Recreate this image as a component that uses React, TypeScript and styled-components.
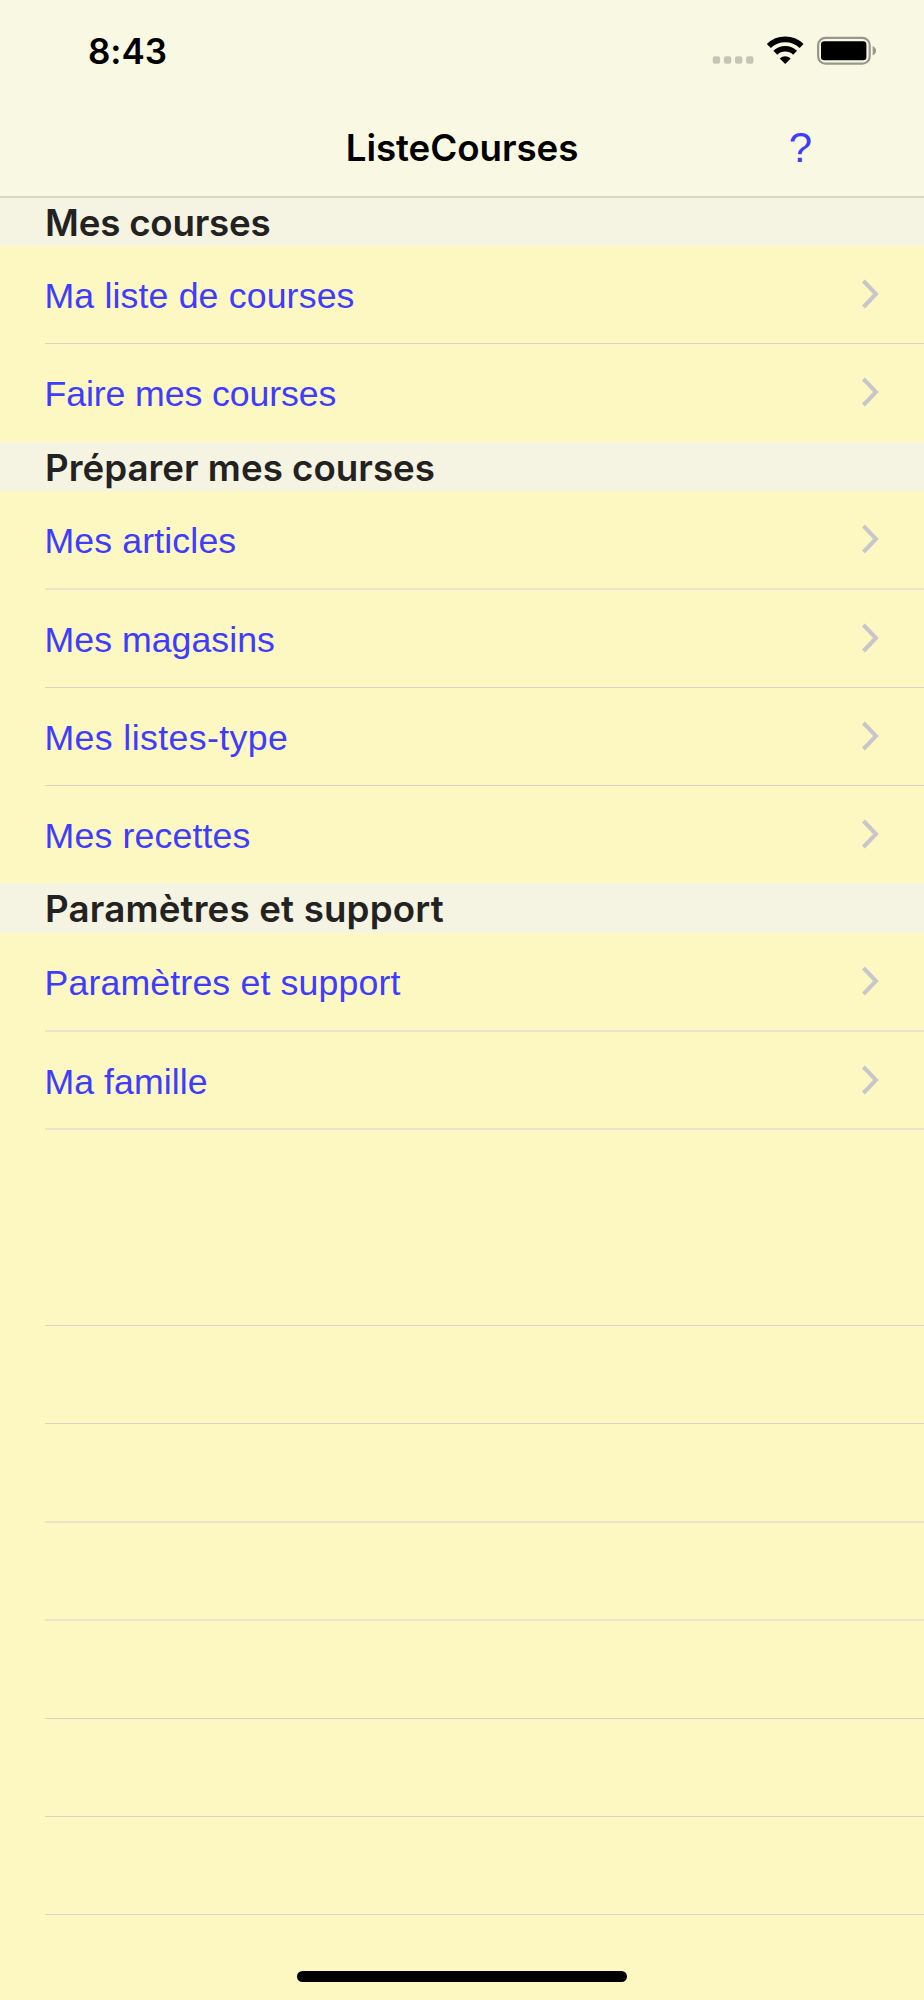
import React from "react";
import styled, { createGlobalStyle } from "styled-components";

const GlobalStyle = createGlobalStyle`
  *, *::before, *::after { box-sizing: border-box; }
  body { margin: 0; background: #fdf7c2; }
`;

const Screen = styled.main`
  width: 924px;
  height: 2000px;
  overflow: hidden;
  position: relative;
  background: #fdf7c2;
  font-family: "Liberation Sans", Arial, sans-serif;
`;

const Header = styled.header`
  height: 198px;
  margin-bottom: -1px;
  position: relative;
  background: #f9f8e3;
  border-bottom: 2px solid #d9d8c5;
`;

const StatusBar = styled.div`
  display: flex;
  align-items: center;
  justify-content: space-between;
  height: 98px;
  padding: 3px 48px 0 88px;
`;

const Time = styled.time`
  font: 600 35px/44px Inter, sans-serif;
  letter-spacing: -0.05px;
  color: #000;
`;

const StatusIcons = styled.svg`
  display: block;
  width: 164px;
  height: 28px;
  overflow: visible;
`;

const NavBar = styled.div`
  display: grid;
  grid-template-columns: 1fr auto 1fr;
  align-items: center;
  height: 99px;
`;

const Title = styled.h1`
  grid-column: 2;
  margin: 0;
  font: 600 36.7px/46px Inter, sans-serif;
  letter-spacing: -0.05px;
  color: #000;
`;

const HelpButton = styled.button`
  justify-self: end;
  margin: 0 112px 0 0;
  padding: 0;
  border: 0;
  background: none;
  font: 400 42px/46px "Liberation Sans", Arial, sans-serif;
  color: #3d3cff;
`;

const SectionTitle = styled.h2<{ $height: number; $tracking: number }>`
  height: ${({ $height }) => $height}px;
  margin: 0;
  padding-left: 45px;
  background: #f5f3e1;
  font: 600 36.7px Inter, sans-serif;
  line-height: ${({ $height }) => $height + 2}px;
  letter-spacing: ${({ $tracking }) => $tracking}px;
  color: #222;
  white-space: nowrap;
`;

const List = styled.ul`
  margin: 0;
  padding: 0;
  list-style: none;
`;

const lineStyles = {
  none: "0",
  crisp: "1px solid #d6d3c8",
  soft: "2px solid #e8e3ca",
};

type Line = keyof typeof lineStyles;

const Row = styled.li<{ $line: Line; $height?: number }>`
  display: flex;
  height: ${({ $height = 98 }) => $height}px;
  margin-left: 45px;
  padding-right: 45px;
  align-items: flex-start;
  justify-content: space-between;
  border-bottom: ${({ $line }) => lineStyles[$line]};
`;

const Label = styled.span<{ $tracking: number }>`
  margin: 28px 0 0 -0.5px;
  font-size: 35.7px;
  line-height: 44px;
  letter-spacing: ${({ $tracking }) => $tracking}px;
  color: #3d3cff;
  white-space: nowrap;
`;

const Chevron = styled.svg`
  display: block;
  width: 18px;
  height: 30px;
  margin-top: 32.5px;
`;

const Spacer = styled.div`
  height: 98px;
`;

const HomeIndicator = styled.div`
  position: absolute;
  left: 297px;
  top: 1971px;
  width: 330px;
  height: 11px;
  border-radius: 6px;
  background: #000;
`;

type Item = { label: string; line: Line; tracking: number; height?: number };
type Section = { title: string; height: number; tracking: number; items: Item[] };

const sections: Section[] = [
  {
    title: "Mes courses",
    height: 49,
    tracking: -0.2,
    items: [
      { label: "Ma liste de courses", line: "crisp", tracking: 0.14 },
      { label: "Faire mes courses", line: "none", tracking: -0.1 },
    ],
  },
  {
    title: "Préparer mes courses",
    height: 49,
    tracking: 0.02,
    items: [
      { label: "Mes articles", line: "soft", tracking: 0.12, height: 99 },
      { label: "Mes magasins", line: "crisp", tracking: 0.03 },
      { label: "Mes listes-type", line: "crisp", tracking: 0.38 },
      { label: "Mes recettes", line: "none", tracking: 0.15, height: 97 },
    ],
  },
  {
    title: "Paramètres et support",
    height: 50,
    tracking: 0.18,
    items: [
      { label: "Paramètres et support", line: "soft", tracking: 0.14, height: 99 },
      { label: "Ma famille", line: "soft", tracking: 0.04 },
    ],
  },
];

const emptyRows: { line: Line; height?: number }[] = [
  { line: "crisp" },
  { line: "crisp" },
  { line: "soft", height: 99 },
  { line: "soft" },
  { line: "crisp" },
  { line: "crisp" },
  { line: "crisp" },
];

export default function App() {
  return (
    <>
      <GlobalStyle />
      <Screen>
        <Header>
          <StatusBar>
            <Time>8:43</Time>
            <StatusIcons viewBox="0 0 164 28">
              <g fill="#c6c5b5">
                <rect x="0.7" y="19.3" width="7.4" height="7.4" rx="2.2" />
                <rect x="11.9" y="19.3" width="7.4" height="7.4" rx="2.2" />
                <rect x="23" y="19.3" width="7.4" height="7.4" rx="2.2" />
                <rect x="34.1" y="19.3" width="7.4" height="7.4" rx="2.2" />
              </g>
              <g fill="none" stroke="#000" strokeWidth="5.6">
                <path d="M56.8 9A23.5 23.5 0 0 1 89.6 9" />
                <path d="M63.3 15.8A14.3 14.3 0 0 1 83.1 15.8" />
              </g>
              <path d="M73.2 27L67.7 21.5Q73.2 16.9 78.7 21.5Z" />
              <rect x="106.1" y="0.9" width="51.6" height="25.8" rx="7.4" fill="none" stroke="#98978a" strokeWidth="2.2" />
              <rect x="109" y="4.2" width="45.4" height="19" rx="3.2" />
              <path d="M160.7 9Q164 10.7 164 13.7T160.7 18.4Z" fill="#98978a" />
            </StatusIcons>
          </StatusBar>
          <NavBar>
            <Title>ListeCourses</Title>
            <HelpButton>?</HelpButton>
          </NavBar>
        </Header>
        {sections.map((section) => (
          <section key={section.title}>
            <SectionTitle $height={section.height} $tracking={section.tracking}>
              {section.title}
            </SectionTitle>
            <List>
              {section.items.map((item) => (
                <Row key={item.label} $line={item.line} $height={item.height}>
                  <Label $tracking={item.tracking}>{item.label}</Label>
                  <Chevron viewBox="0 0 18 30">
                    <path d="M2.5 2L15 15L2.5 28" fill="none" stroke="#c7c6cb" strokeWidth="4" />
                  </Chevron>
                </Row>
              ))}
            </List>
          </section>
        ))}
        <Spacer />
        <List>
          {emptyRows.map((row, i) => (
            <Row key={i} $line={row.line} $height={row.height} />
          ))}
        </List>
        <HomeIndicator />
      </Screen>
    </>
  );
}
